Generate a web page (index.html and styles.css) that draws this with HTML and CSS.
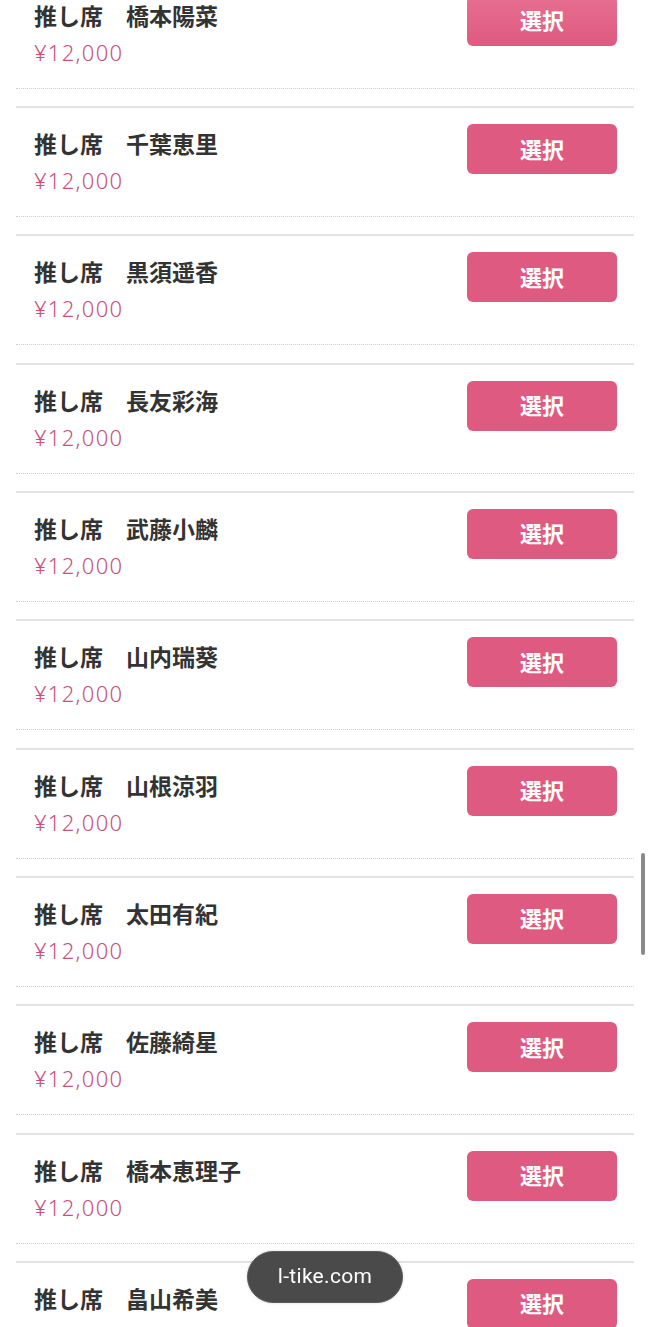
FILE: index.html
```html
<!DOCTYPE html>
<html lang="ja">
<head>
    <meta charset="UTF-8">
    <meta name="viewport" content="width=device-width, initial-scale=1.0">
    <title>推し席 選択</title>
    <link rel="stylesheet" href="styles.css">
</head>
<body>
    <ul class="seat-list">
        <li class="seat">
            <div class="seat-body">
                <div class="seat-info">
                    <p class="seat-name">推し席　橋本陽菜</p>
                    <p class="seat-price">¥12,000</p>
                </div>
                <button class="select-btn is-pressed">選択</button>
            </div>
            <div class="seat-foot"></div>
        </li>
        <li class="seat">
            <div class="seat-body">
                <div class="seat-info">
                    <p class="seat-name">推し席　千葉恵里</p>
                    <p class="seat-price">¥12,000</p>
                </div>
                <button class="select-btn">選択</button>
            </div>
            <div class="seat-foot"></div>
        </li>
        <li class="seat">
            <div class="seat-body">
                <div class="seat-info">
                    <p class="seat-name">推し席　黒須遥香</p>
                    <p class="seat-price">¥12,000</p>
                </div>
                <button class="select-btn">選択</button>
            </div>
            <div class="seat-foot"></div>
        </li>
        <li class="seat">
            <div class="seat-body">
                <div class="seat-info">
                    <p class="seat-name">推し席　長友彩海</p>
                    <p class="seat-price">¥12,000</p>
                </div>
                <button class="select-btn">選択</button>
            </div>
            <div class="seat-foot"></div>
        </li>
        <li class="seat">
            <div class="seat-body">
                <div class="seat-info">
                    <p class="seat-name">推し席　武藤小麟</p>
                    <p class="seat-price">¥12,000</p>
                </div>
                <button class="select-btn">選択</button>
            </div>
            <div class="seat-foot"></div>
        </li>
        <li class="seat">
            <div class="seat-body">
                <div class="seat-info">
                    <p class="seat-name">推し席　山内瑞葵</p>
                    <p class="seat-price">¥12,000</p>
                </div>
                <button class="select-btn">選択</button>
            </div>
            <div class="seat-foot"></div>
        </li>
        <li class="seat">
            <div class="seat-body">
                <div class="seat-info">
                    <p class="seat-name">推し席　山根涼羽</p>
                    <p class="seat-price">¥12,000</p>
                </div>
                <button class="select-btn">選択</button>
            </div>
            <div class="seat-foot"></div>
        </li>
        <li class="seat">
            <div class="seat-body">
                <div class="seat-info">
                    <p class="seat-name">推し席　太田有紀</p>
                    <p class="seat-price">¥12,000</p>
                </div>
                <button class="select-btn">選択</button>
            </div>
            <div class="seat-foot"></div>
        </li>
        <li class="seat">
            <div class="seat-body">
                <div class="seat-info">
                    <p class="seat-name">推し席　佐藤綺星</p>
                    <p class="seat-price">¥12,000</p>
                </div>
                <button class="select-btn">選択</button>
            </div>
            <div class="seat-foot"></div>
        </li>
        <li class="seat">
            <div class="seat-body">
                <div class="seat-info">
                    <p class="seat-name">推し席　橋本恵理子</p>
                    <p class="seat-price">¥12,000</p>
                </div>
                <button class="select-btn">選択</button>
            </div>
            <div class="seat-foot"></div>
        </li>
        <li class="seat">
            <div class="seat-body">
                <div class="seat-info">
                    <p class="seat-name">推し席　畠山希美</p>
                    <p class="seat-price">¥12,000</p>
                </div>
                <button class="select-btn">選択</button>
            </div>
            <div class="seat-foot"></div>
        </li>
    </ul>

    <div class="toast">l-tike.com</div>
    <div class="scroll-thumb"></div>
</body>
</html>
```

FILE: styles.css
```css
html, body {
    height: 100%;
}
body {
    margin: 0;
    background: #ffffff;
    font-family: "Noto Sans CJK JP", "Noto Sans", sans-serif;
    overflow: hidden;
}
.seat-list {
    list-style: none;
    margin: -22.33px 16px 0 16px;
    padding: 0;
}
.seat {
    border-top: 2px solid #e3e3e3;
}
.seat-body {
    display: flex;
    justify-content: space-between;
    align-items: flex-start;
    box-sizing: border-box;
    height: 108px;
    padding: 16px 17px 0 18px;
}
.seat-info {
    padding-top: 3px;
}
.seat-name {
    margin: 0;
    font-size: 23px;
    line-height: 32px;
    font-weight: 700;
    color: #333333;
}
.seat-price {
    margin: 5px 0 0 0;
    font-family: "Noto Sans", sans-serif;
    font-size: 22px;
    line-height: 32px;
    font-weight: 300;
    letter-spacing: 1.3px;
    color: #c8507e;
}
.select-btn {
    width: 150px;
    height: 50px;
    padding: 0 0 3px 0;
    background-color: #df5a80;
    color: #ffffff;
    border: none;
    border-radius: 6px;
    font-family: "Noto Sans CJK JP", sans-serif;
    font-size: 22px;
    font-weight: 700;
    cursor: pointer;
}
.select-btn.is-pressed {
    background: linear-gradient(#e66f91, #df5a80);
}
.seat-foot {
    box-sizing: border-box;
    height: 18.33px;
    border-top: 1px dotted #cfcfcf;
}
.toast {
    position: fixed;
    left: 247px;
    top: 1251px;
    width: 156px;
    height: 52px;
    box-sizing: border-box;
    padding-bottom: 2px;
    border-radius: 26px;
    background: #4a4a4a;
    border: 1px solid #5c5c5c;
    box-shadow: 0 0 3px rgba(0, 0, 0, 0.15);
    color: #ffffff;
    font-family: Roboto, "Noto Sans", sans-serif;
    font-size: 21px;
    letter-spacing: 0.3px;
    display: flex;
    align-items: center;
    justify-content: center;
}
.scroll-thumb {
    position: fixed;
    left: 641px;
    top: 853px;
    width: 4px;
    height: 102px;
    border-radius: 2px;
    background: #8a8a8a;
}
```
